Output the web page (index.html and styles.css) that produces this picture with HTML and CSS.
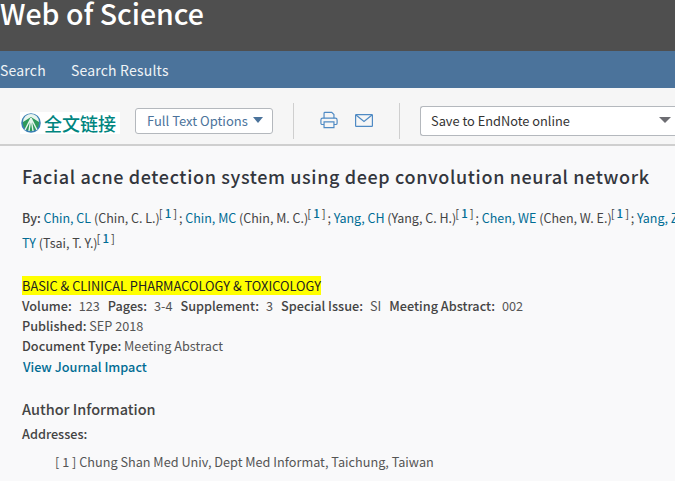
FILE: index.html
```html
<!DOCTYPE html>
<html lang="en">
<head>
<meta charset="utf-8">
<title>Web of Science</title>
<link rel="stylesheet" href="styles.css">
</head>
<body>
<div class="page">
  <header class="brand">Web of Science</header>
  <nav class="crumbs"><span>Search</span><span>Search Results</span></nav>
  <section class="toolbar">
    <div class="fulltext">
      <svg class="globe" width="20" height="20" viewBox="0 0 20 20">
        <circle cx="10" cy="10" r="9" fill="#2f9a5a" stroke="#3b7fb5" stroke-width="1.6"/>
        <path d="M2 9A8 8 0 0 1 18 9L10 4Z" fill="#e8f5ee"/>
        <path d="M10 5L4 17M10 5L8 18M10 5L12 18M10 5L16 17" stroke="#e8f5ee" stroke-width="1.4" fill="none"/>
      </svg>
      <span class="fulltext-label">全文链接</span>
    </div>
    <button class="options">Full Text Options<span class="caret caret-blue"></span></button>
    <span class="divider divider-a"></span>
    <svg class="icon printer" width="18" height="18" viewBox="0 0 20 20" fill="none" stroke="#4f8ac4" stroke-width="1.3">
      <path d="M4.5 8V2.5A1 1 0 0 1 5.500 1.500H13L15.500 4V8"/>
      <path d="M4.500 15H2.500A1.500 1.500 0 0 1 1 13.500V10A2 2 0 0 1 3 8H17A2 2 0 0 1 19 10V13.500A1.500 1.500 0 0 1 17.500 15H15.500"/>
      <path d="M4.500 12H15.500V18.500H4.500Z"/>
    </svg>
    <svg class="icon mail" width="18" height="13" viewBox="0 0 18 13" fill="none" stroke="#4f8ac4" stroke-width="1.200">
      <rect x="0.600" y="0.600" width="16.800" height="11.800" rx="0.600"/>
      <path d="M1 1L9 7.500L17 1"/>
    </svg>
    <span class="divider divider-b"></span>
    <div class="save">Save to EndNote online<span class="caret caret-grey"></span></div>
  </section>
  <main class="record">
    <h1 class="title">Facial acne detection system using deep convolution neural network</h1>
    <p class="authors"><b class="label">By:</b> <a>Chin, CL</a> (Chin, C. L.)<sup>[<a class="ref">1</a>]</sup> ; <a>Chin, MC</a> (Chin, M. C.)<sup>[<a class="ref">1</a>]</sup> ; <a>Yang, CH</a> (Yang, C. H.)<sup>[<a class="ref">1</a>]</sup> ; <a>Chen, WE</a> (Chen, W. E.)<sup>[<a class="ref">1</a>]</sup> ; <a>Yang, ZY</a> (Yang, Z. Y.)<sup>[<a class="ref">1</a>]</sup> ; <a>Tsai,</a><br><a>TY</a> (Tsai, T. Y.)<sup>[<a class="ref">1</a>]</sup></p>
    <div class="source">
      <p class="journal"><mark>BASIC &amp; CLINICAL PHARMACOLOGY &amp; TOXICOLOGY</mark></p>
      <p class="meta"><b class="label">Volume:</b><span class="value">123</span><b class="label">Pages:</b><span class="value">3-4</span><b class="label">Supplement:</b><span class="value">3</span><b class="label">Special Issue:</b><span class="value">SI</span><b class="label">Meeting Abstract:</b><span class="value">002</span></p>
      <p class="meta"><b class="label">Published:</b> SEP 2018</p>
      <p class="meta"><b class="label">Document Type:</b> Meeting Abstract</p>
      <p class="impact"><a>View Journal Impact</a></p>
    </div>
    <h2 class="section-title">Author Information</h2>
    <p class="addresses-label"><b class="label">Addresses:</b></p>
    <p class="address">[ 1 ] Chung Shan Med Univ, Dept Med Informat, Taichung, Taiwan</p>
  </main>
</div>
</body>
</html>
```
FILE: styles.css
```css
html, body {
  margin: 0;
  height: 481px;
  overflow: hidden;
}
body {
  font-family: "Noto Sans CJK SC", "Noto Sans", sans-serif;
  font-size: 12.7px;
  color: #444;
  background: #f9f9fa;
}
.page {
  width: 675px;
  overflow: hidden;
}
.brand {
  height: 51px;
  background: #4f4f4f;
  color: #fff;
  font-size: 28.5px;
  font-weight: 500;
  line-height: 26px;
}
.crumbs {
  height: 37px;
  background: #4b739b;
  display: flex;
  gap: 25px;
  align-items: center;
  color: #f0f3f6;
  font-size: 14px;
  letter-spacing: 0.2px;
}
.toolbar {
  box-sizing: border-box;
  height: 58px;
  background: #f6f6f6;
  border-bottom: 2px solid #cfcfcf;
  display: flex;
  align-items: center;
  padding: 10px 0 0 20px;
  overflow: hidden;
}
.fulltext {
  width: 100px;
  height: 22px;
  margin-top: 4px;
  background: #fff;
  display: flex;
  align-items: center;
  gap: 3px;
  padding-left: 1px;
  box-sizing: border-box;
  flex: none;
}
.globe {
  flex: none;
}
.fulltext-label {
  color: #00857f;
  font-size: 18px;
  font-weight: 500;
  line-height: 22px;
  white-space: nowrap;
}
.options {
  margin-left: 15px;
  box-sizing: border-box;
  width: 138px;
  height: 26px;
  flex: none;
  border: 1px solid #b4b8bd;
  border-radius: 3px;
  background: #fff;
  color: #4b739b;
  font: inherit;
  font-size: 13px;
  padding: 0 0 2px 11px;
  display: flex;
  align-items: center;
  white-space: nowrap;
}
.caret {
  display: inline-block;
  width: 0;
  height: 0;
  border-left: 5px solid transparent;
  border-right: 5px solid transparent;
}
.caret-blue {
  border-top: 6px solid #4b739b;
  margin-left: 5px;
}
.caret-grey {
  border-left-width: 6px;
  border-right-width: 6px;
  border-top: 6px solid #6d6d72;
  margin-left: auto;
  margin-right: 4px;
}
.divider {
  width: 1px;
  height: 36px;
  background: #cfcfcf;
  flex: none;
}
.divider-a {
  margin-left: 20px;
}
.icon {
  flex: none;
}
.printer {
  margin-left: 26px;
  margin-bottom: 2px;
}
.mail {
  margin-left: 17px;
  margin-bottom: 1px;
}
.divider-b {
  margin-left: 26px;
}
.save {
  flex: none;
  margin-left: 20px;
  box-sizing: border-box;
  width: 255px;
  height: 30px;
  border: 1px solid #b4b8bd;
  border-right: 0;
  border-radius: 3px 0 0 3px;
  background: #fff;
  color: #333;
  padding: 0 0 2px 10px;
  font-size: 12.800px;
  display: flex;
  align-items: center;
  white-space: nowrap;
}
.record {
  padding: 18px 0 0 22px;
}
.title {
  margin: 0;
  font-size: 18px;
  font-weight: 500;
  line-height: 24px;
  letter-spacing: 0.630px;
  color: #33363d;
  white-space: nowrap;
}
p {
  margin: 0;
}
a {
  color: #006c94;
}
.label {
  font-weight: 500;
  color: #444;
}
.authors {
  margin-top: 17px;
  font-size: 12.500px;
  line-height: 25px;
  white-space: nowrap;
}
sup {
  font-size: 11.500px;
  line-height: 0;
  letter-spacing: 0.500px;
  margin: 0 -1.500px 0 -1px;
}
.ref {
  font-weight: 500;
  padding: 0 1.500px;
}
.source {
  margin-top: 21px;
}
.journal {
  line-height: 20px;
  font-size: 12.800px;
  color: #222;
}
mark {
  background: #ffff00;
  color: #222;
}
.meta {
  line-height: 20px;
  color: #555;
}
.value {
  margin: 0 8px 0 7px;
}
.impact {
  line-height: 22px;
  font-weight: 500;
  margin-left: 1px;
}
.section-title {
  margin: 20px 0 0;
  font-size: 14.500px;
  font-weight: 500;
  line-height: 22px;
  color: #444;
}
.addresses-label {
  margin-top: 4px;
  line-height: 20px;
}
.address {
  margin: 8px 0 0 33px;
  line-height: 20px;
  color: #555;
}
```
